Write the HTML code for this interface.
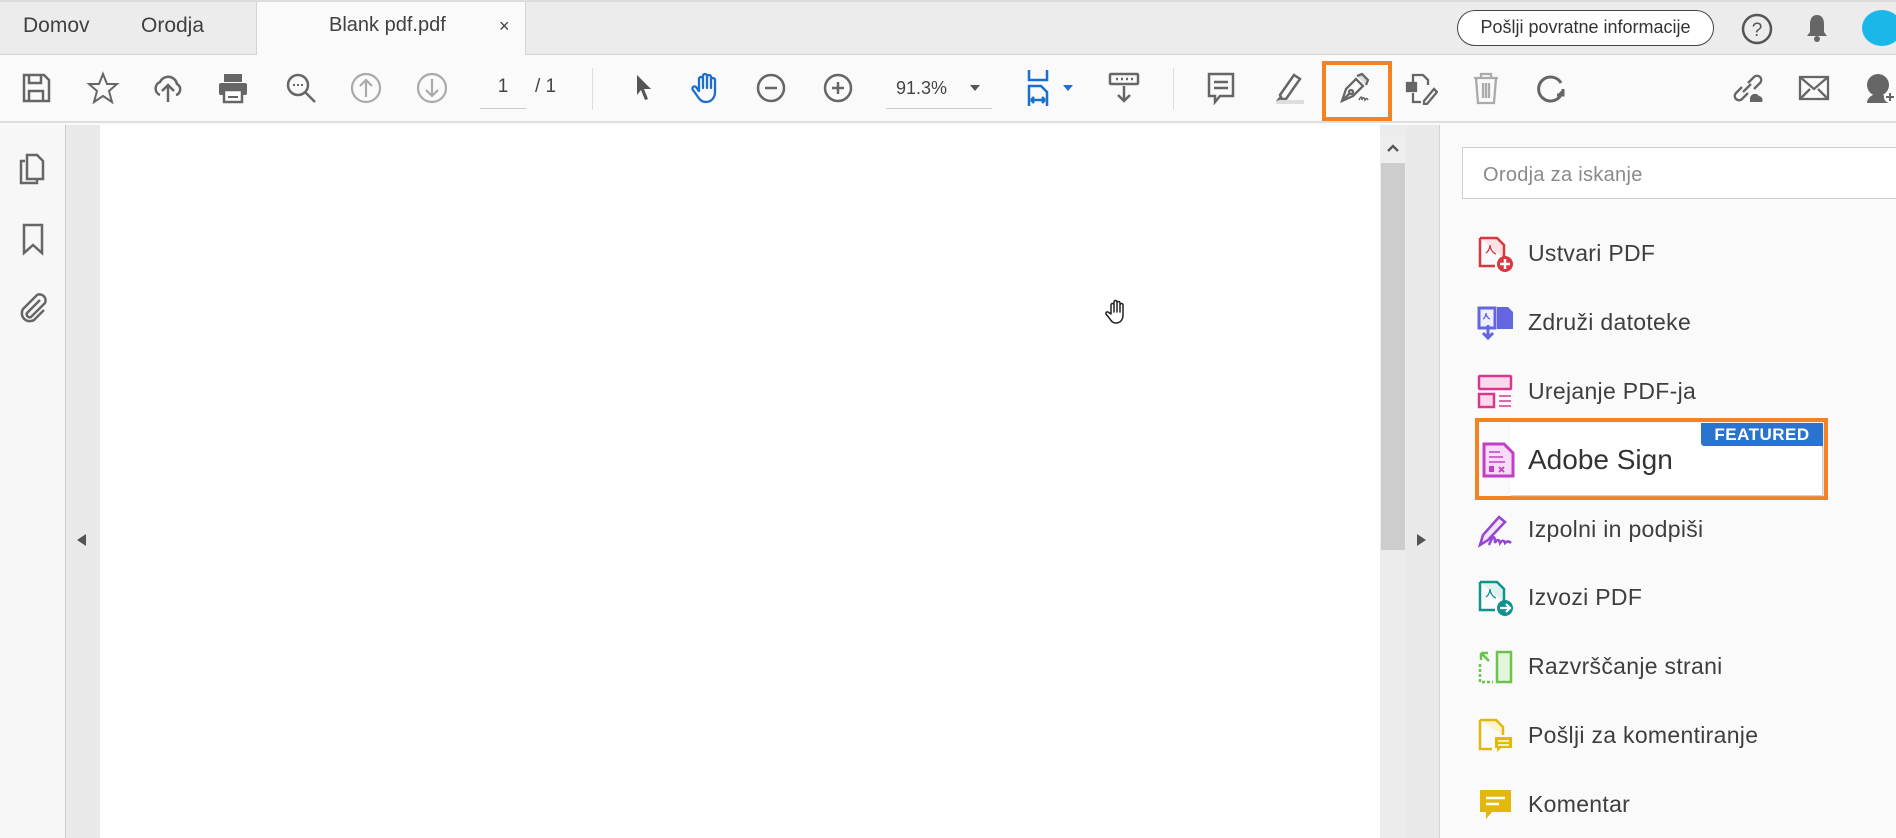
<!DOCTYPE html>
<html><head><meta charset="utf-8"><style>
*{margin:0;padding:0;box-sizing:border-box}
body{width:1896px;height:838px;overflow:hidden;background:#fafafa;font-family:"Liberation Sans",sans-serif;position:relative;color:#4b4b4b}
.a{position:absolute}
.tabbar{left:0;top:0;width:1896px;height:55px;background:#ececec;border-top:2px solid #ddd;border-bottom:1px solid #d4d4d4}
.tt{font-size:21px;color:#404040;top:14px}
.tool{left:0;top:55px;width:1896px;height:68px;background:#fafafa;border-bottom:2px solid #dedede}
svg.i{position:absolute;width:34px;height:34px;top:71px}
.item{left:1528px;font-size:23px;color:#3e3e3e;letter-spacing:.3px}
.ic{position:absolute;left:1477px;width:37px;height:37px}
</style></head><body>
<div class="a tabbar"></div>
<div class="a" style="left:256px;top:2px;width:270px;height:53px;background:#fafafa;border-left:1px solid #d4d4d4;border-right:1px solid #d4d4d4"></div>
<div class="a tt" style="left:23px">Domov</div>
<div class="a tt" style="left:141px">Orodja</div>
<div class="a tt" style="left:329px;font-size:20px">Blank pdf.pdf</div>
<div class="a tt" style="left:499px;font-size:18px;top:16px">×</div>
<div class="a" style="left:1457px;top:10px;width:257px;height:36px;border:1.5px solid #444;border-radius:18px;background:#fff;font-size:18px;line-height:33px;text-align:center;color:#333">Pošlji povratne informacije</div>
<svg class="a" style="left:1740px;top:12px" width="34" height="34" viewBox="0 0 34 34"><circle cx="17" cy="17" r="14" fill="none" stroke="#555" stroke-width="2.5"/><text x="17" y="24" font-size="19" text-anchor="middle" fill="#555" font-family="Liberation Sans">?</text></svg>
<svg class="a" style="left:1803px;top:12px" width="28" height="32" viewBox="0 0 28 32"><path d="M14 3c-5 0-7 4-7 9v8l-3 4h20l-3-4v-8c0-5-2-9-7-9z" fill="#666"/><circle cx="14" cy="27" r="3" fill="#666"/></svg>
<div class="a" style="left:1862px;top:10px;width:40px;height:36px;border-radius:50%;background:#1ab8e8"></div>

<div class="a tool"></div>
<!-- toolbar icons -->
<svg class="i" style="left:19px" viewBox="0 0 34 34" fill="none" stroke="#666" stroke-width="2.5"><path d="M5 4h20l5 5v21H5z"/><path d="M10 4v8h12V4M10 30v-10h14v10" /></svg>
<svg class="i" style="left:86px" viewBox="0 0 34 34" fill="none" stroke="#666" stroke-width="2"><path d="M17 3l4 10h10l-8 7 3 11-9-6-9 6 3-11-8-7h10z"/></svg>
<svg class="i" style="left:151px" viewBox="0 0 34 34" fill="none" stroke="#666" stroke-width="2.5"><path d="M9 24a7 7 0 0 1 0-13 9 9 0 0 1 17 2 6 6 0 0 1-1 11"/><path d="M17 31V15M11 20l6-6 6 6"/></svg>
<svg class="i" style="left:216px" viewBox="0 0 34 34"><rect x="8" y="3" width="18" height="8" fill="#666"/><rect x="3" y="12" width="28" height="12" rx="2" fill="#666"/><rect x="8" y="19" width="18" height="12" fill="#fff" stroke="#666" stroke-width="2.5"/><path d="M12 26h10" stroke="#666" stroke-width="2"/></svg>
<svg class="i" style="left:284px" viewBox="0 0 34 34" fill="none" stroke="#666" stroke-width="2.5"><circle cx="14" cy="14" r="10"/><path d="M21 21l10 10"/><path d="M9 14h2M13 14h2M17 14h2" stroke-width="2"/></svg>
<svg class="i" style="left:349px" viewBox="0 0 34 34" fill="none" stroke="#aaa" stroke-width="2.2"><circle cx="17" cy="17" r="14"/><path d="M17 26V9M11 15l6-6 6 6"/></svg>
<svg class="i" style="left:415px" viewBox="0 0 34 34" fill="none" stroke="#aaa" stroke-width="2.2"><circle cx="17" cy="17" r="14"/><path d="M17 8v17M11 19l6 6 6-6"/></svg>
<div class="a" style="left:481px;top:76px;font-size:19px;color:#444;width:44px;text-align:center">1</div>
<div class="a" style="left:480px;top:108px;width:46px;height:1px;background:#ccc"></div>
<div class="a" style="left:535px;top:76px;font-size:19px;color:#444">/ 1</div>
<div class="a" style="left:592px;top:68px;width:1px;height:42px;background:#ddd"></div>
<svg class="i" style="left:627px" viewBox="0 0 34 34"><path d="M10 4l14 14h-7l4 10-3 1-4-10-4 5z" fill="#555"/></svg>
<svg class="i" style="left:689px" viewBox="0 0 34 34" fill="none" stroke="#1d6fce" stroke-width="2.3" stroke-linejoin="round"><path d="M10 20V8a2 2 0 0 1 4 0v9V5a2 2 0 0 1 4 0v12V6a2 2 0 0 1 4 0v11V9a2 2 0 0 1 4 0v12c0 6-4 10-9 10-4 0-6-2-8-5l-5-7a2 2 0 0 1 3-3z"/></svg>
<svg class="i" style="left:754px" viewBox="0 0 34 34" fill="none" stroke="#666" stroke-width="2.5"><circle cx="17" cy="17" r="13"/><path d="M11 17h12"/></svg>
<svg class="i" style="left:821px" viewBox="0 0 34 34" fill="none" stroke="#666" stroke-width="2.5"><circle cx="17" cy="17" r="13"/><path d="M11 17h12M17 11v12"/></svg>
<div class="a" style="left:896px;top:78px;font-size:18px;color:#444">91.3%</div>
<div class="a" style="left:970px;top:85px;width:0;height:0;border-left:5px solid transparent;border-right:5px solid transparent;border-top:6px solid #555"></div>
<div class="a" style="left:886px;top:108px;width:106px;height:1px;background:#ccc"></div>
<svg class="i" style="left:1025px;top:68px;height:40px" viewBox="0 0 34 40" fill="none" stroke="#1d6fce" stroke-width="2.5"><path d="M4 2v10h18V2M4 38V18h12l6 6v14M6 32h14M6 32l3-3M6 32l3 3M20 32l-3-3M20 32l-3 3"/></svg>
<div class="a" style="left:1063px;top:85px;border-left:5px solid transparent;border-right:5px solid transparent;border-top:6px solid #1d6fce"></div>
<svg class="i" style="left:1107px" viewBox="0 0 34 34" fill="none" stroke="#666" stroke-width="2.5"><rect x="3" y="3" width="28" height="10" rx="1"/><path d="M9 8h2M14 8h2M19 8h2M24 8h2M17 15v15M11 24l6 6 6-6"/></svg>
<div class="a" style="left:1173px;top:68px;width:1px;height:42px;background:#ddd"></div>
<svg class="i" style="left:1204px" viewBox="0 0 34 34" fill="none" stroke="#666" stroke-width="2.5"><path d="M5 3h24v22H16l-5 6v-6H5z"/><path d="M10 11h14M10 17h14"/></svg>
<svg class="i" style="left:1272px" viewBox="0 0 34 34"><path d="M8 24l14-20 6 4-14 20h-4z" fill="none" stroke="#666" stroke-width="2.5"/><rect x="4" y="29" width="28" height="4" fill="#ddd"/><path d="M4 30l4-5 3 3z" fill="#666"/></svg>
<div class="a" style="left:1322px;top:61px;width:70px;height:60px;border:4px solid #f58220"></div>
<svg class="i" style="left:1337px" viewBox="0 0 34 34" fill="none" stroke="#666" stroke-width="2.3"><path d="M5 30l4-12 10-10 7 7-10 10z"/><path d="M5 30l8-8"/><circle cx="14" cy="21" r="2"/><path d="M20 5l5-2 6 6-2 5" fill="#ddd"/><path d="M22 29c2-4 3-4 3 0 1-3 2-3 3 0 1-2 2-2 3 0" stroke-width="1.6"/></svg>
<svg class="i" style="left:1404px" viewBox="0 0 34 34" fill="none" stroke="#666" stroke-width="2.3"><path d="M9 12V4h10l5 5v5M9 22v9h8"/><rect x="3" y="12" width="9" height="8" fill="#666"/><path d="M20 30l10-12 3 3-10 12h-3z"/></svg>
<svg class="i" style="left:1469px" viewBox="0 0 34 34" fill="none" stroke="#aaa" stroke-width="2.3"><path d="M5 7h24M12 7V3h10v4M7 7l2 25h16l2-25M14 12v15M17 12v15M20 12v15"/></svg>
<svg class="i" style="left:1534px" viewBox="0 0 34 34" fill="none" stroke="#666" stroke-width="3"><path d="M27 12A12 12 0 1 0 27 24"/><path d="M23 24h6v-6" fill="#666"/></svg>
<svg class="i" style="left:1730px" viewBox="0 0 34 34" fill="none" stroke="#666" stroke-width="2.3"><path d="M12 16l-6 6a4 4 0 0 0 6 6l6-6M18 12l6-6a4 4 0 0 1 6 6l-6 6M13 21l8-8"/><path d="M20 31h12a4 4 0 0 0-3-6 5 5 0 0 0-9 2z" fill="#666" stroke="none"/></svg>
<svg class="i" style="left:1797px" viewBox="0 0 34 34" fill="none" stroke="#666" stroke-width="2.3"><rect x="3" y="6" width="28" height="22"/><path d="M3 6l14 12 14-12M3 28l10-10M31 28l-10-10"/></svg>
<svg class="i" style="left:1862px" viewBox="0 0 34 34"><circle cx="16" cy="14" r="11" fill="#666"/><path d="M5 32a11 9 0 0 1 22 0z" fill="#666"/><circle cx="28" cy="26" r="6" fill="#fff"/><path d="M28 22v8M24 26h8" stroke="#666" stroke-width="2"/></svg>

<!-- left rail -->
<div class="a" style="left:0;top:125px;width:66px;height:713px;background:#f7f7f7;border-right:1px solid #ccc"></div>
<div class="a" style="left:66px;top:125px;width:34px;height:713px;background:#e9e9e9"></div>
<svg class="a" style="left:17px;top:151px" width="32" height="36" viewBox="0 0 32 36" fill="none" stroke="#666" stroke-width="2.5"><path d="M8 10H4v22h16v-4"/><path d="M10 4h10l6 6v18H10z"/></svg>
<svg class="a" style="left:20px;top:222px" width="26" height="34" viewBox="0 0 26 34" fill="none" stroke="#666" stroke-width="2.5"><path d="M4 3h18v28l-9-8-9 8z"/></svg>
<svg class="a" style="left:16px;top:290px" width="34" height="34" viewBox="0 0 34 34" fill="none" stroke="#666" stroke-width="2.5"><path d="M24 10L11 23a3 3 0 0 0 4 4l14-14a6 6 0 0 0-8-8L7 19a8 8 0 0 0 11 11l10-10"/></svg>
<div class="a" style="left:77px;top:534px;border-top:6px solid transparent;border-bottom:6px solid transparent;border-right:9px solid #555"></div>

<!-- doc -->
<div class="a" style="left:100px;top:125px;width:1280px;height:713px;background:#fff"></div>
<svg class="a" style="left:1105px;top:298px" width="26" height="28" viewBox="0 0 26 28" fill="#fff" stroke="#222" stroke-width="1.5" stroke-linejoin="round"><path d="M6 16V7a1.5 1.5 0 0 1 3 0v7V4a1.5 1.5 0 0 1 3 0v10V5a1.5 1.5 0 0 1 3 0v9V7a1.5 1.5 0 0 1 3 0v10c0 5-3 8-7 8-3 0-5-2-6-4l-4-5a1.5 1.5 0 0 1 2-2z"/></svg>
<!-- scrollbar -->
<div class="a" style="left:1380px;top:125px;width:26px;height:713px;background:#ececec"></div>
<div class="a" style="left:1381px;top:136px;width:24px;height:27px;background:#eee"></div>
<svg class="a" style="left:1386px;top:143px" width="14" height="10" viewBox="0 0 14 10"><path d="M2 8l5-5 5 5" fill="none" stroke="#555" stroke-width="2.3"/></svg>
<div class="a" style="left:1381px;top:163px;width:24px;height:387px;background:#cdcdcd"></div>
<div class="a" style="left:1406px;top:125px;width:34px;height:713px;background:#e9e9e9;border-right:1px solid #d4d4d4"></div>
<div class="a" style="left:1417px;top:534px;border-top:6px solid transparent;border-bottom:6px solid transparent;border-left:9px solid #555"></div>

<!-- right panel -->
<div class="a" style="left:1441px;top:125px;width:455px;height:713px;background:#fafafa"></div>
<div class="a" style="left:1462px;top:147px;width:440px;height:52px;background:#fff;border:1px solid #cfcfcf;font-size:20px;color:#8a8a8a;padding:16px 0 0 20px;letter-spacing:.3px">Orodja za iskanje</div>

<svg class="ic" style="top:236px" viewBox="0 0 37 37"><path d="M3 2h17l7 7v13" fill="#fbe3e3" stroke="#d7373f" stroke-width="2.5"/><path d="M3 2v28h15" fill="none" stroke="#d7373f" stroke-width="2.5"/><path d="M9 17c3-2 4-6 4-8 0 4 3 8 6 9" fill="none" stroke="#d7373f" stroke-width="1.3"/><circle cx="28" cy="28" r="8" fill="#d7373f"/><path d="M28 23v10M23 28h10" stroke="#fff" stroke-width="2.5"/></svg>
<div class="a item" style="top:240px">Ustvari PDF</div>
<svg class="ic" style="top:305px" viewBox="0 0 37 37"><rect x="2" y="3" width="16" height="20" fill="#eeeefd" stroke="#6465e0" stroke-width="3"/><path d="M20 2h11l5 5v17H20z" fill="#6465e0"/><path d="M11 20v12M6 28l5 5 5-5" stroke="#6465e0" stroke-width="3" fill="none"/><path d="M6 14c2-1 3-4 3-6 0 3 2 5 4 6" fill="none" stroke="#6465e0" stroke-width="1.3"/></svg>
<div class="a item" style="top:309px">Združi datoteke</div>
<svg class="ic" style="top:374px" viewBox="0 0 37 37"><rect x="2" y="2" width="32" height="13" rx="1" fill="#fbd9ea" stroke="#d83790" stroke-width="2.5"/><rect x="2" y="20" width="15" height="13" fill="#fbd9ea" stroke="#d83790" stroke-width="2.5"/><path d="M22 22h12M22 27h12M22 32h12" stroke="#d83790" stroke-width="1.6"/></svg>
<div class="a item" style="top:378px">Urejanje PDF-ja</div>

<div class="a" style="left:1475px;top:418px;width:353px;height:82px;border:4px solid #f58220"></div>
<div class="a" style="left:1510px;top:423px;width:312px;height:72px;background:#fff;box-shadow:1px 1px 2px #bbb"></div>
<div class="a" style="left:1701px;top:423px;width:122px;height:23px;background:#2a74cf;border-radius:0 0 0 3px;color:#fff;font-weight:bold;font-size:17px;text-align:center;line-height:23px;letter-spacing:.5px">FEATURED</div>
<svg class="ic" style="top:442px;left:1481px" viewBox="0 0 37 37"><path d="M3 2h20l9 9v23H3z" fill="#f6dcf6" stroke="#c23ec7" stroke-width="3"/><path d="M8 10h11M8 15h14M8 20h16" stroke="#c23ec7" stroke-width="1.6"/><rect x="8" y="24" width="5" height="6" fill="#c23ec7"/><path d="M18 25l5 5M23 25l-5 5" stroke="#c23ec7" stroke-width="1.8"/></svg>
<div class="a" style="left:1528px;top:444px;font-size:28px;color:#333">Adobe Sign</div>

<svg class="ic" style="top:513px" viewBox="0 0 37 37"><path d="M3 32l3-10 16-18 6 5-17 18z" fill="#f1e3fb" stroke="#9445d4" stroke-width="2.5"/><path d="M12 32c4-10 6-10 6-2 2-4 4-4 5 0 2-3 4-3 5 0 2-2 4-2 6 0" fill="none" stroke="#9445d4" stroke-width="2.5"/></svg>
<div class="a item" style="top:516px">Izpolni in podpiši</div>
<svg class="ic" style="top:580px" viewBox="0 0 37 37"><path d="M3 2h17l7 7v13" fill="#dff1f1" stroke="#12928c" stroke-width="2.5"/><path d="M3 2v28h15" fill="none" stroke="#12928c" stroke-width="2.5"/><path d="M9 17c3-2 4-6 4-8 0 4 3 8 6 9" fill="none" stroke="#12928c" stroke-width="1.3"/><circle cx="28" cy="28" r="8" fill="#12928c"/><path d="M23 28h9M29 24l4 4-4 4" stroke="#fff" stroke-width="2.2" fill="none"/></svg>
<div class="a item" style="top:584px">Izvozi PDF</div>
<svg class="ic" style="top:649px" viewBox="0 0 37 37"><rect x="20" y="3" width="14" height="30" fill="#e3f5dc" stroke="#6cc24a" stroke-width="2.5"/><path d="M3 15v18h13" fill="none" stroke="#6cc24a" stroke-width="2.5" stroke-dasharray="3 2"/><path d="M4 4l8 8M4 4v7M4 4h7" stroke="#6cc24a" stroke-width="2.5" fill="none"/></svg>
<div class="a item" style="top:653px">Razvrščanje strani</div>
<svg class="ic" style="top:718px" viewBox="0 0 37 37"><path d="M3 2h16l7 7v8" fill="#fbf2cf" stroke="#e2b80c" stroke-width="2.5"/><path d="M3 2v29h12" fill="none" stroke="#e2b80c" stroke-width="2.5"/><path d="M18 19h17v11H24l-4 4v-4h-2z" fill="#e2b80c"/><path d="M21 23h11M21 27h11" stroke="#fff" stroke-width="1.5"/></svg>
<div class="a item" style="top:722px">Pošlji za komentiranje</div>
<svg class="ic" style="top:787px" viewBox="0 0 37 37"><path d="M3 3h31v22H15l-6 7v-7H3z" fill="#e2b80c"/><path d="M9 11h19M9 17h13" stroke="#fff" stroke-width="2.5"/></svg>
<div class="a item" style="top:791px">Komentar</div>
</body></html>
